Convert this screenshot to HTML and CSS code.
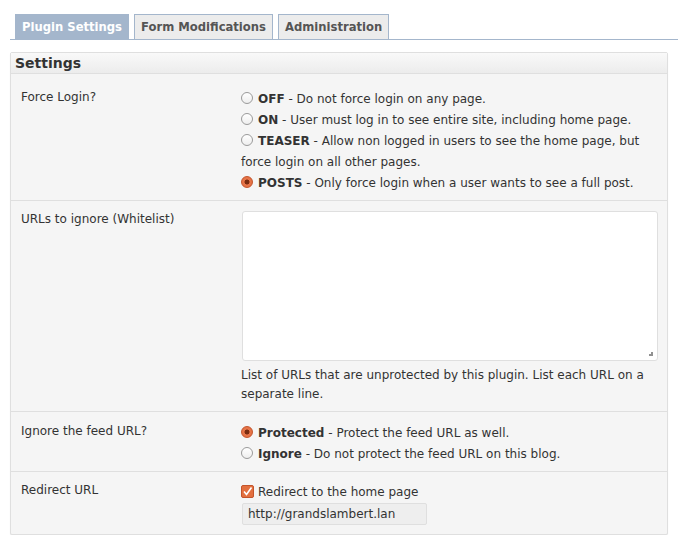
FILE: index.html
```html
<!DOCTYPE html>
<html>
<head>
<meta charset="utf-8">
<link rel="stylesheet" href="styles.css">
</head>
<body>
<div class="page">
  <div class="tabs">
    <span class="tab active">Plugin Settings</span>
    <span class="tab">Form Modifications</span>
    <span class="tab">Administration</span>
  </div>
  <div class="box">
    <div class="box-head">Settings</div>
    <div class="row first">
      <div class="label">Force Login?</div>
      <div class="field">
        <div class="line"><span class="radio"></span><b>OFF</b> - Do not force login on any page.</div>
        <div class="line"><span class="radio"></span><b>ON</b> - User must log in to see entire site, including home page.</div>
        <div class="line"><span class="radio"></span><b>TEASER</b> - Allow non logged in users to see the home page, but force login on all other pages.</div>
        <div class="line"><span class="radio on"></span><b>POSTS</b> - Only force login when a user wants to see a full post.</div>
      </div>
    </div>
    <div class="row">
      <div class="label">URLs to ignore (Whitelist)</div>
      <div class="field">
        <div class="textarea"><span class="grip"></span></div>
        <div class="desc">List of URLs that are unprotected by this plugin. List each URL on a separate line.</div>
      </div>
    </div>
    <div class="row third">
      <div class="label">Ignore the feed URL?</div>
      <div class="field">
        <div class="line"><span class="radio on"></span><b>Protected</b> - Protect the feed URL as well.</div>
        <div class="line"><span class="radio"></span><b>Ignore</b> - Do not protect the feed URL on this blog.</div>
      </div>
    </div>
    <div class="row last">
      <div class="label">Redirect URL</div>
      <div class="field">
        <div class="line"><span class="check"><svg width="13" height="13" viewBox="0 0 13 13"><path d="M3 6.5 L5.5 9.5 L10.5 2.5" fill="none" stroke="#fff" stroke-width="1.6"/></svg></span>Redirect to the home page</div>
        <div class="input">http://grandslambert.lan</div>
      </div>
    </div>
  </div>
</div>
</body>
</html>
```

FILE: styles.css
```css
* { box-sizing: border-box; }
html, body { margin: 0; padding: 0; background: #fff; }
body {
  font-family: "DejaVu Sans", sans-serif;
  font-size: 12px;
  color: #333;
}
.page { padding: 14px 0 0 10px; }
.tabs {
  display: flex;
  gap: 5px;
  padding-left: 5px;
  border-bottom: 1px solid #a4b6cc;
  height: 26px;
}
.tab {
  display: block;
  height: 25px;
  line-height: 24px;
  padding: 0 6px;
  font-weight: bold;
  font-size: 11.6px;
  color: #555;
  background: #ececec;
  border: 1px solid #a4b6cc;
  border-bottom: none;
}
.tab.active {
  background: #a4b6cc;
  color: #fff;
}
.box {
  margin-top: 12px;
  width: 658px;
  border: 1px solid #dfdfdf;
  background: #f5f5f5;
  box-shadow: 0 1px 1px rgba(0,0,0,0.08);
  border-radius: 2px;
}
.box-head {
  height: 21px;
  line-height: 20px;
  padding-left: 4px;
  font-weight: bold;
  font-size: 14px;
  color: #333;
  background: linear-gradient(#f9f9f9, #ececec);
  border-bottom: 1px solid #dfdfdf;
}
.row {
  display: flex;
  border-bottom: 1px solid #dfdfdf;
  padding: 10px 0 7px;
}
.row.first { padding-top: 15px; padding-bottom: 6px; }
.row.third { padding-top: 11px; padding-bottom: 6px; }
.row.last { border-bottom: none; padding-bottom: 9px; }
.label {
  width: 230px;
  padding: 1px 10px 0;
  line-height: 14px;
  flex: none;
}
.field {
  flex: 1;
  padding-right: 9px;
  line-height: 21px;
}
.line { line-height: 21px; }
.radio {
  display: inline-block;
  width: 12px;
  height: 12px;
  border-radius: 50%;
  border: 1px solid #9a9a9a;
  background: linear-gradient(#fff, #eee);
  vertical-align: -1px;
  margin-right: 5px;
}
.radio.on {
  border-color: #c4542b;
  background: radial-gradient(circle, #7a2b10 0, #7a2b10 2.2px, #e9774b 2.8px, #de6a3d 100%);
}
.check {
  display: inline-block;
  width: 13px;
  height: 13px;
  border: 1px solid #c4542b;
  border-radius: 2px;
  background: #e3703f;
  vertical-align: -2px;
  margin-right: 4px;
  overflow: hidden;
}
.check svg { display: block; margin: -1px 0 0 -1px; }
b { color: #333; }
.textarea {
  margin-left: 1px;
  height: 150px;
  background: #fff;
  border: 1px solid #dfdfdf;
  border-radius: 3px;
  position: relative;
}
.grip {
  position: absolute;
  right: 4px;
  bottom: 4px;
  width: 4px;
  height: 4px;
  background:
    radial-gradient(circle, #888 0.7px, transparent 0.8px) 0 2px / 2px 2px no-repeat,
    radial-gradient(circle, #888 0.7px, transparent 0.8px) 2px 0 / 2px 2px no-repeat,
    radial-gradient(circle, #888 0.7px, transparent 0.8px) 2px 2px / 2px 2px no-repeat;
}
.desc {
  margin-top: 5px;
  line-height: 19px;
}
.input {
  margin: 0 0 0 1px;
  width: 185px;
  height: 22px;
  line-height: 20px;
  padding-left: 5px;
  background: #eee;
  border: 1px solid #dfdfdf;
  border-radius: 2px;
}
```
